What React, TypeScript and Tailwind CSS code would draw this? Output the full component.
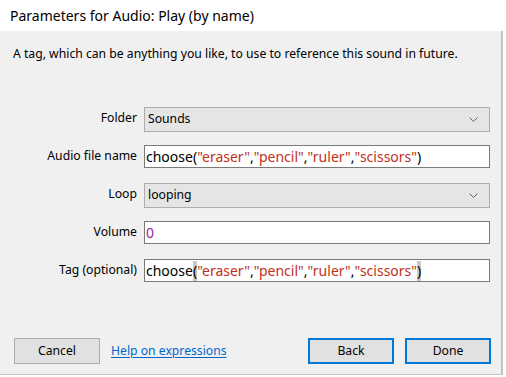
import type { ReactNode } from 'react';

const font = { fontFamily: '"Noto Sans", "Segoe UI", sans-serif' };

function Str({ children }: { children: ReactNode }) {
  return <span className="text-[#c1301c]">{children}</span>;
}

function ChooseExpr({ matched }: { matched?: boolean }) {
  const hl = matched ? 'bg-[#c8c8c8]' : '';
  return (
    <>
      choose<span className={hl}>(</span>
      <Str>"eraser"</Str>,<Str>"pencil"</Str>,<Str>"ruler"</Str>,<Str>"scissors"</Str>
      <span className={hl}>)</span>
    </>
  );
}

function Row({ label, children }: { label: string; children: ReactNode }) {
  return (
    <div className="flex items-start">
      <div className="w-[138px] shrink-0 pr-[1px] pt-[3px] text-right text-[12.2px] leading-[16px] text-black">
        {label}
      </div>
      <div className="ml-[6px] w-[346px]">{children}</div>
    </div>
  );
}

function Select({ value }: { value: string }) {
  return (
    <div className="flex h-[25px] items-center justify-between border border-[#adadad] bg-[#e5e5e5] pl-[3px] pr-[11px] text-[12.2px] text-black">
      <span>{value}</span>
      <svg width="9" height="5" viewBox="0 0 9 5" fill="none">
        <path d="M0.5 0.5 L4.5 4.5 L8.5 0.5" stroke="#666" strokeWidth="1" />
      </svg>
    </div>
  );
}

function Field({ children }: { children: ReactNode }) {
  return (
    <div className="flex h-[23px] items-center whitespace-nowrap border border-[#7a7a7a] bg-white pl-[1px] text-[14px] leading-[20px] text-black">
      {children}
    </div>
  );
}

function Btn({ label, primary }: { label: string; primary?: boolean }) {
  return (
    <button
      type="button"
      className={`flex h-[26px] w-[86px] items-center justify-center bg-[#e1e1e1] text-[12.2px] text-black ${
        primary ? 'border-2 border-[#0078d7]' : 'border border-[#adadad]'
      }`}
    >
      {label}
    </button>
  );
}

export default function App() {
  return (
    <div className="flex h-[377px] w-[506px] flex-col overflow-hidden bg-white" style={font}>
      <div className="flex h-[31px] w-[503px] shrink-0 items-center pl-[10px] pb-[1px] text-[14px] text-black">
        Parameters for Audio: Play (by name)
      </div>
      <div className="flex h-[344px] w-[503px] flex-col border-b-[1px] border-r-[2px] border-[#c4c4c4] bg-[#f0f0f0]">
        <div className="pl-[13px] pt-[15px] text-[12.2px] leading-[16px] text-black">
          A tag, which can be anything you like, to use to reference this sound in future.
        </div>
        <div className="mt-[45px] flex flex-col gap-[13px]">
          <Row label="Folder">
            <Select value="Sounds" />
          </Row>
          <Row label="Audio file name">
            <Field>
              <ChooseExpr />
            </Field>
          </Row>
          <div className="mt-[2px]">
            <Row label="Loop">
              <Select value="looping" />
            </Row>
          </div>
          <Row label="Volume">
            <Field>
              <span className="text-[#a020a0]">0</span>
            </Field>
          </Row>
          <div className="mt-[2px]">
            <Row label="Tag (optional)">
              <Field>
                <ChooseExpr matched />
              </Field>
            </Row>
          </div>
        </div>
        <div className="mt-auto mb-[10px] flex items-center pl-[14px]">
          <Btn label="Cancel" />
          <a className="ml-[11px] text-[12.2px] text-[#0066cc] underline underline-offset-2" href="#">
            Help on expressions
          </a>
          <div className="ml-auto mr-[10px] flex gap-[11px]">
            <Btn label="Back" primary />
            <Btn label="Done" primary />
          </div>
        </div>
      </div>
    </div>
  );
}
